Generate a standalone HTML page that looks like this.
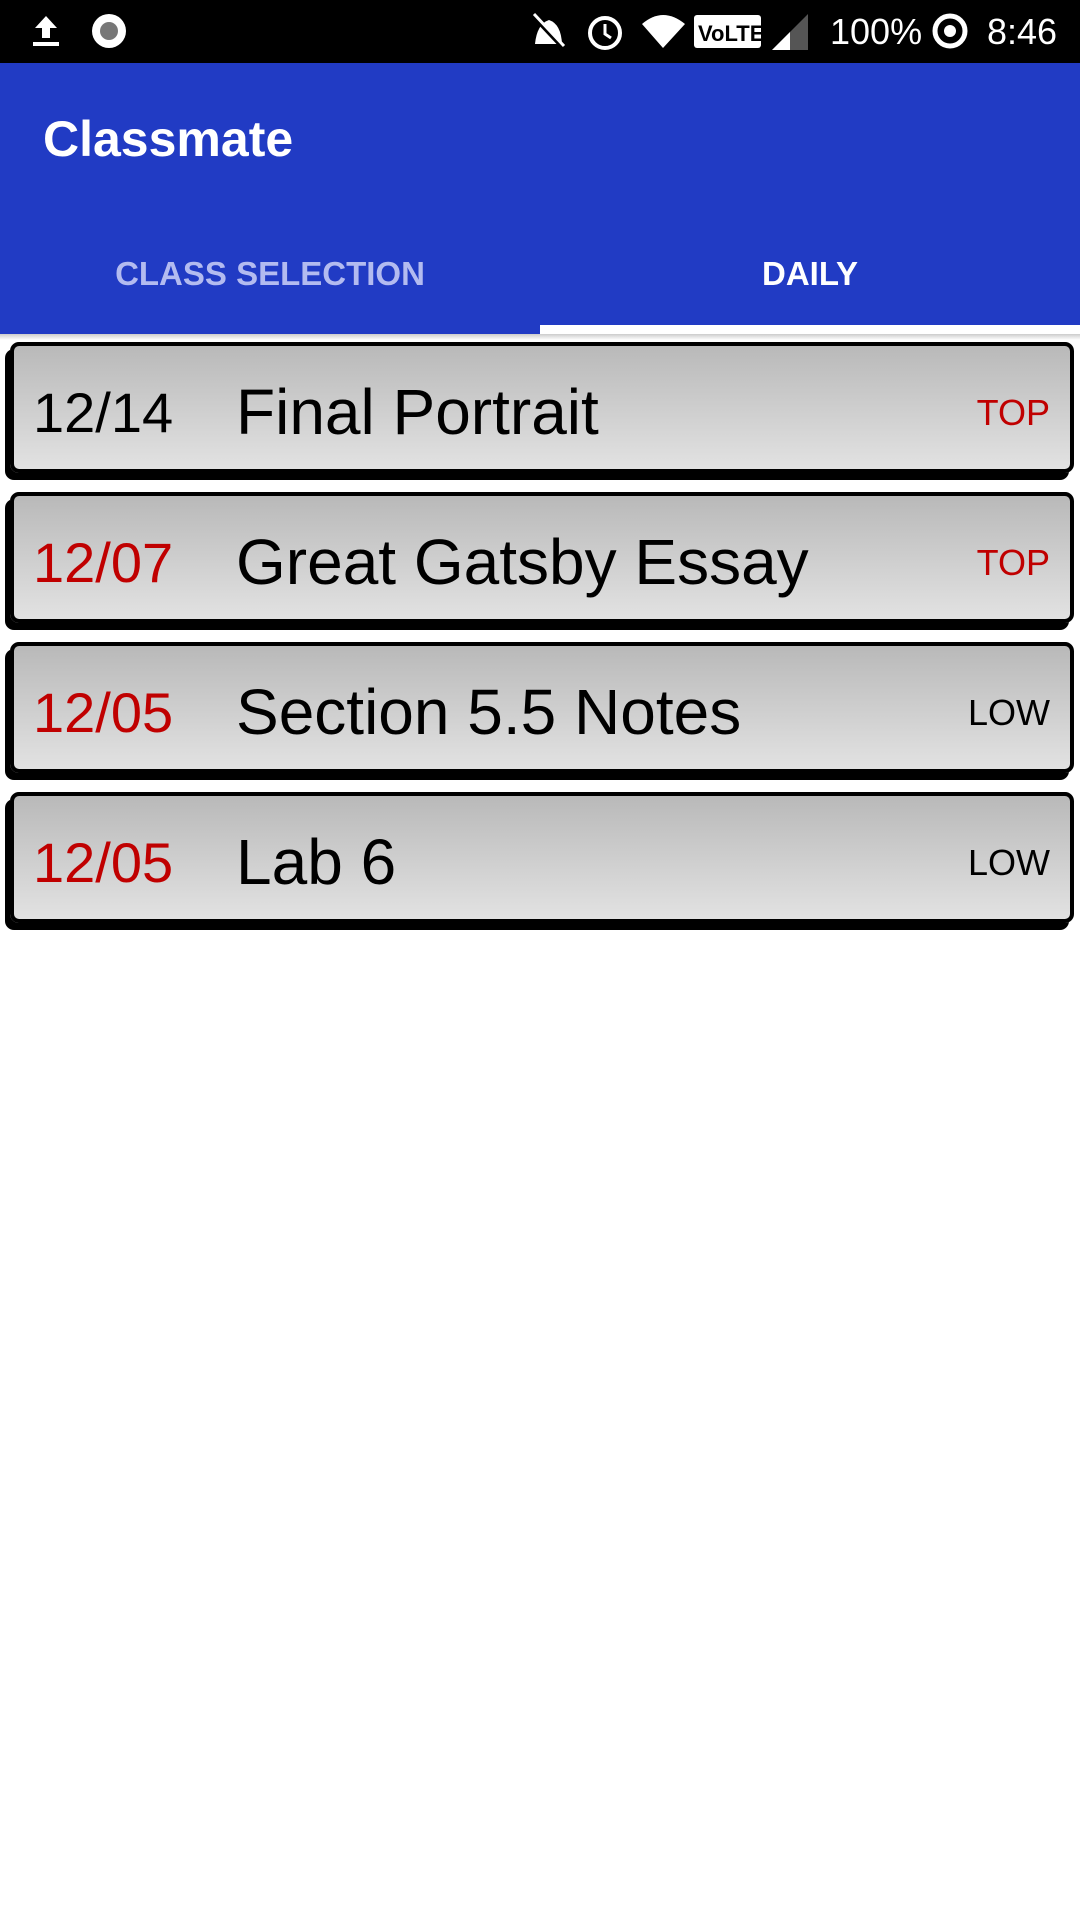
<!DOCTYPE html>
<html><head><meta charset="utf-8"><style>
*{margin:0;padding:0;box-sizing:border-box}
body{width:1080px;height:1920px;background:#fff;font-family:"Liberation Sans",sans-serif;position:relative;overflow:hidden}
.sb{position:absolute;left:0;top:0;width:1080px;height:63px;background:#000;color:#fff}
.app{position:absolute;left:0;top:63px;width:1080px;height:271px;background:#213bc4}
.title{position:absolute;left:43px;top:47px;font-size:50px;font-weight:bold;color:#fff}
.tab{position:absolute;top:192px;font-size:33px;font-weight:bold;width:540px;text-align:center}
.ind{position:absolute;left:540px;top:325px;width:540px;height:10px;background:#fff}
.shadowline{position:absolute;left:0;top:334px;width:1080px;height:6px;background:linear-gradient(#ccc,#fff)}
.card{position:absolute;left:10px;width:1064px;height:131px;border:4px solid #000;border-radius:9px;background:linear-gradient(#b9b9b9,#e2e2e2);box-shadow:-5px 7px 0 #000}
.d{position:absolute;left:19px;top:0;line-height:133px;font-size:56px}
.t{position:absolute;left:222px;top:0;line-height:133px;font-size:64px;color:#000}
.p{position:absolute;right:20px;top:0;line-height:133px;font-size:36px}
.r{color:#c00000}
</style></head><body>
<div class="sb">
<svg width="1080" height="63" style="position:absolute;left:0;top:0">
<path d="M35 28 L46 16 L57 28 H50 V38 H42 V28Z" fill="#fff"/><rect x="33" y="42" width="26" height="4" fill="#fff"/>
<circle cx="109" cy="31" r="17" fill="#fff"/><circle cx="109" cy="31" r="9" fill="#777"/>
<path d="M535 44 Q537 24 549 20 Q561 24 562 44Z" fill="#fff"/><line x1="533" y1="16" x2="563" y2="48" stroke="#000" stroke-width="4"/><line x1="534" y1="14" x2="564" y2="46" stroke="#fff" stroke-width="3"/>
<circle cx="605" cy="33" r="15" fill="none" stroke="#fff" stroke-width="4"/><path d="M605 24 V34 L611 38" stroke="#fff" stroke-width="3" fill="none"/>
<path d="M642 24 Q663 6 685 24 L663 48Z" fill="#fff"/>
<rect x="694" y="15" width="67" height="33" rx="3" fill="#fff"/><text x="698" y="41" font-size="22" font-weight="bold" fill="#000" font-family="Liberation Sans">VoLTE</text>
<path d="M772 50 L808 14 V50Z" fill="#555"/><path d="M772 50 L790 32 V50Z" fill="#fff"/>
<text x="830" y="44" font-size="36" fill="#fff" font-family="Liberation Sans">100%</text>
<circle cx="950" cy="31" r="15" fill="none" stroke="#fff" stroke-width="5"/><circle cx="950" cy="31" r="6" fill="#fff"/>
<text x="987" y="44" font-size="36" fill="#fff" font-family="Liberation Sans">8:46</text>
</svg>
</div>
<div class="app">
<div class="title">Classmate</div>
<div class="tab" style="left:0;color:#b3bbf0">CLASS SELECTION</div>
<div class="tab" style="left:540px;color:#fff">DAILY</div>
</div>
<div class="ind"></div>
<div class="shadowline"></div>

<div class="card" style="top:342px"><div class="d">12/14</div><div class="t">Final Portrait</div><div class="p r">TOP</div></div>
<div class="card" style="top:492px"><div class="d r">12/07</div><div class="t">Great Gatsby Essay</div><div class="p r">TOP</div></div>
<div class="card" style="top:642px"><div class="d r">12/05</div><div class="t">Section 5.5 Notes</div><div class="p">LOW</div></div>
<div class="card" style="top:792px"><div class="d r">12/05</div><div class="t">Lab 6</div><div class="p">LOW</div></div>
</body></html>
